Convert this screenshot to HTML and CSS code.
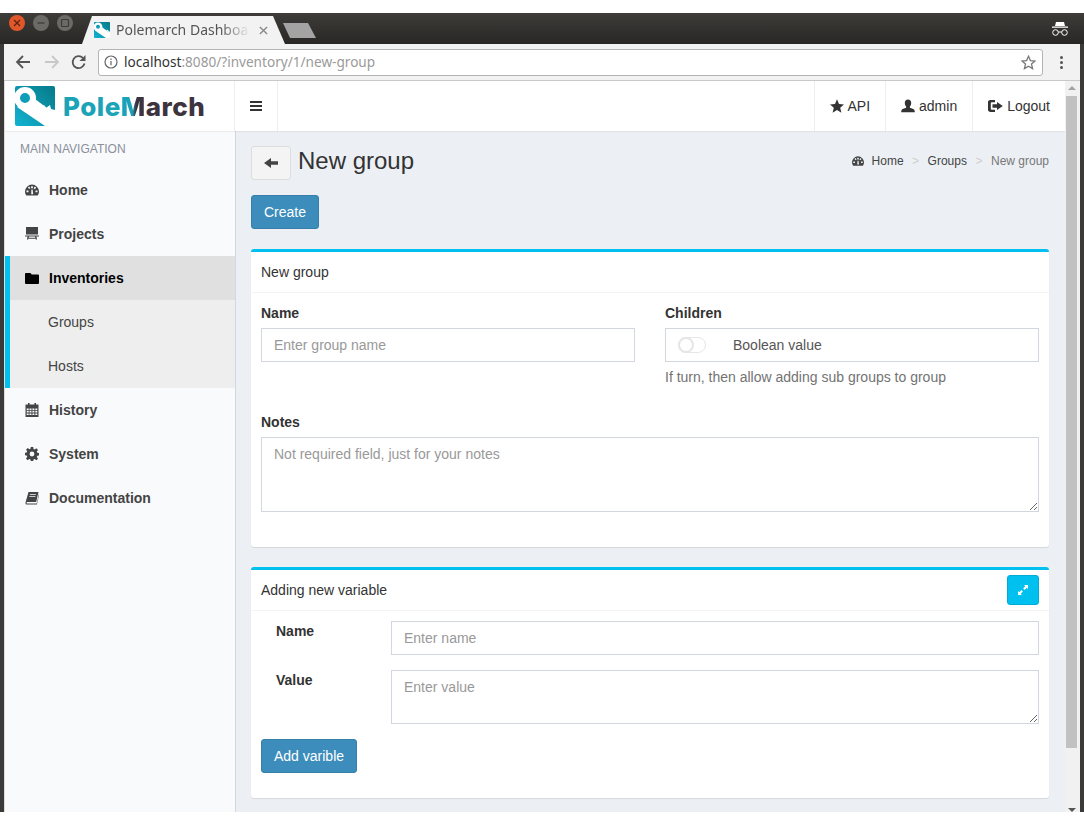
FILE: index.html
```html
<!DOCTYPE html>
<html lang="en">
<head>
    <meta charset="UTF-8">
    <meta name="viewport" content="width=device-width, initial-scale=1.0">
    <title>Polemarch Dashboard</title>
    <link rel="stylesheet" href="styles.css">
</head>
<body>

    <!-- icon sprites -->
    <svg class="sprites" width="0" height="0">
        <defs>
            <linearGradient id="logo-fill" x1="0" y1="1" x2="1" y2="0">
                <stop offset="0" stop-color="#12b3d2"/>
                <stop offset="1" stop-color="#067a88"/>
            </linearGradient>
        </defs>
        <symbol id="logo-mark" viewBox="0 0 40 40">
            <rect width="40" height="40" rx="2" fill="url(#logo-fill)"/>
            <path fill="#fff" d="M2 21 16 10 40 28V40H30z"/>
            <circle cx="10" cy="12" r="8" fill="#0e9db8" stroke="#fff" stroke-width="6"/>
            <path fill="#fff" fill-rule="evenodd" d="M26 22 29 19 31 22 35 19 36 23 40 24V30L30 28zM33 24 32 26 36 27 36 25z"/>
        </symbol>
        <symbol id="i-dashboard" viewBox="0 0 14 14">
            <path fill-rule="evenodd" d="M7 1.600A7 7 0 0 0 0 8.600c0 1.500.5 2.900 1.300 3.900h11.400c.8-1 1.300-2.400 1.300-3.900a7 7 0 0 0-7-7zM6.100 3.200h1.800v2H6.100zM2.900 4.600l1.300-1 1.200 1.500-1.300 1zM9.800 3.600l1.300 1-1.200 1.600-1.300-1zM1.500 7.600h2v1.600h-2zM10.500 7.600h2v1.600h-2zM6.200 11.200 6.400 6.600h1.200l.6 4.600z"/>
        </symbol>
        <symbol id="i-board" viewBox="0 0 14 14">
            <path d="M1 0h12v7.600H1zM0 8.400h14v1.200H0zM2.600 9.600h1.400l-.8 3H1.900zM10 9.600h1.400l.7 3h-1.300zM3.600 10.800h6.800v1H3.600z"/>
        </symbol>
        <symbol id="i-folder" viewBox="0 0 14 14">
            <path d="M1 2h4.500l1.200 1.600H13a1 1 0 0 1 1 1V12a1 1 0 0 1-1 1H1a1 1 0 0 1-1-1V3a1 1 0 0 1 1-1z"/>
        </symbol>
        <symbol id="i-calendar" viewBox="0 0 14 14">
            <path fill-rule="evenodd" d="M3 0h1.600v1.500h4.800V0H11v1.500h2.500V14H.5V1.500H3zM1.700 5.600v1.600h2V5.600zM4.500 5.600v1.600h2V5.600zM7.400 5.600v1.600h2V5.600zM10.300 5.600v1.600h2V5.600zM1.700 8v1.600h2V8zM4.500 8v1.600h2V8zM7.400 8v1.600h2V8zM10.300 8v1.600h2V8zM1.700 10.400V12h2v-1.600zM4.500 10.400V12h2v-1.600zM7.400 10.400V12h2v-1.600zM10.300 10.400V12h2v-1.600z"/>
        </symbol>
        <symbol id="i-cog" viewBox="0 0 14 14">
            <path fill-rule="evenodd" d="M5.800 0h2.400l.3 2 1.200.5L11.400 1.300l1.600 1.700-1.200 1.600.5 1.200 2 .3v2.400l-2 .3-.5 1.200 1.200 1.700-1.600 1.600-1.700-1.200-1.200.5-.3 2H5.800l-.3-2-1.200-.5-1.700 1.200L1 11.400l1.200-1.700-.5-1.200-2-.3V5.800l2-.3.5-1.200L1 2.700l1.700-1.600 1.600 1.200 1.200-.5zM7 4.600a2.400 2.400 0 1 0 0 4.800 2.400 2.400 0 0 0 0-4.800z"/>
        </symbol>
        <symbol id="i-book" viewBox="0 0 14 14">
            <path fill-rule="evenodd" d="M3.500 1H13.500L11.200 11H2.300c-.6 0-.9.4-.8.9.1.4.4.6.8.6h9.400l2.300-10 .3.3-2.400 10.700H2.100C1 13.500.3 12.700.5 11.500zM5 3.200l-.2.8h6l.2-.8zM4.500 5.200l-.2.8h6l.2-.8z"/>
        </symbol>
        <symbol id="i-star" viewBox="0 0 14 14">
            <path d="M7 .3l2 4.800 5 .4-3.800 3.300 1.200 5L7 11.100l-4.400 2.700 1.200-5L0 5.500l5-.4z"/>
        </symbol>
        <symbol id="i-user" viewBox="0 0 14 14">
            <path d="M7 .5c2 0 3.200 1.500 3.200 3.500 0 1.300-.5 2.600-1.300 3.400v1.400c1.700.5 4.100 1.100 4.600 2.500.2.600.3 1.300.3 1.900H.2c0-.6.1-1.300.3-1.900.5-1.400 2.900-2 4.600-2.500V7.400C4.300 6.600 3.800 5.300 3.800 4 3.800 2 5 .5 7 .5z"/>
        </symbol>
        <symbol id="i-logout" viewBox="0 0 15 14">
            <path d="M2.500 1H7v2.200H3.600c-.5 0-.8.300-.8.800v6c0 .5.300.8.800.8H7V13H2.500C1.100 13 0 12.100 0 10.800V3.200C0 1.900 1.100 1 2.500 1zM9 3l5.800 4L9 11V8.700H4.500V5.300H9z"/>
        </symbol>
        <symbol id="i-back" viewBox="0 0 14 14">
            <path d="M7 2v3.300h7v3.400H7V12L0 7z"/>
        </symbol>
        <symbol id="i-menu" viewBox="0 0 12 10">
            <path d="M0 0h12v2H0zM0 4h12v2H0zM0 8h12v2H0z"/>
        </symbol>
        <symbol id="i-resize" viewBox="0 0 12 12">
            <path d="M7 1h4v4L9.700 3.700 7.500 5.900 6.100 4.500 8.300 2.300zM5.900 7.500 3.700 9.700 5 11H1V7l1.300 1.300L4.500 6.100z"/>
        </symbol>
    </svg>

    <div class="window">

        <div class="titlebar">
            <div class="win-buttons">
                <span class="win-btn close"><svg viewBox="0 0 16 16"><path d="M5 5l6 6M11 5l-6 6"/></svg></span>
                <span class="win-btn"><svg viewBox="0 0 16 16"><path d="M4.500 8h7"/></svg></span>
                <span class="win-btn"><svg viewBox="0 0 16 16"><rect x="4.500" y="4.500" width="7" height="7" rx="1"/></svg></span>
            </div>
            <div class="tab">
                <svg class="favicon"><use href="#logo-mark"/></svg>
                <span class="tab-title">Polemarch Dashboard</span>
                <svg class="tab-close" viewBox="0 0 10 10"><path d="M1 1l8 8M9 1l-8 8"/></svg>
            </div>
            <div class="new-tab"></div>
            <svg class="incognito" viewBox="0 0 18 16">
                <path fill="#fff" d="M5 1h8l1 4H4zM1 5.600h16v1.200H1z"/>
                <g fill="none" stroke="#fff" stroke-width="1">
                    <circle cx="4.500" cy="11.500" r="2.800"/>
                    <circle cx="13.500" cy="11.500" r="2.800"/>
                    <path d="M7.300 11h3.400"/>
                </g>
            </svg>
        </div>

        <div class="toolbar">
            <svg class="tool-icon" viewBox="0 0 16 16"><path d="M15 8H2M8 2 2 8l6 6" fill="none" stroke="#555" stroke-width="1.800"/></svg>
            <svg class="tool-icon" viewBox="0 0 16 16"><path d="M1 8h13M8 2l6 6-6 6" fill="none" stroke="#c8c8c8" stroke-width="1.800"/></svg>
            <svg class="tool-icon reload" viewBox="0 0 16 16"><path d="M13.500 9.500A6 6 0 1 1 12 4" fill="none" stroke="#555" stroke-width="1.800"/><path d="M14.500 1v6h-6z" fill="#555"/></svg>
            <div class="omnibox">
                <svg class="info-icon" viewBox="0 0 14 14">
                    <circle cx="7" cy="7" r="6" fill="none" stroke="#666" stroke-width="1.200"/>
                    <path d="M6.400 6h1.200v4.200H6.400zM6.400 3.600h1.200v1.300H6.400z" fill="#666"/>
                </svg>
                <span class="url"><b>localhost</b>:8080/?inventory/1/new-group</span>
                <svg class="bookmark" viewBox="0 0 14 14"><path d="M7 1.200l1.800 4 4.300.4-3.300 2.800 1 4.300L7 10.400l-3.800 2.300 1-4.300L.9 5.600l4.300-.4z" fill="none" stroke="#777" stroke-width="1.200"/></svg>
            </div>
            <div class="dots"><i></i><i></i><i></i></div>
        </div>

        <div class="view">
            <div class="app">
                <header class="top-header">
                    <a class="brand">
                        <svg class="brand-mark"><use href="#logo-mark"/></svg>
                        <span class="brand-name">Pole<em>M</em><strong>arch</strong></span>
                    </a>
                    <a class="menu-toggle"><svg class="icon-menu"><use href="#i-menu"/></svg></a>
                    <nav class="top-nav">
                        <a class="api-link"><svg class="icon"><use href="#i-star"/></svg>API</a>
                        <a><svg class="icon"><use href="#i-user"/></svg>admin</a>
                        <a><svg class="icon icon-wide"><use href="#i-logout"/></svg>Logout</a>
                    </nav>
                </header>

                <div class="columns">
                    <aside class="sidebar">
                        <div class="side-title">MAIN NAVIGATION</div>
                        <a class="side-item"><svg class="icon"><use href="#i-dashboard"/></svg>Home</a>
                        <a class="side-item"><svg class="icon"><use href="#i-board"/></svg>Projects</a>
                        <div class="side-group">
                            <a class="side-item active"><svg class="icon"><use href="#i-folder"/></svg>Inventories</a>
                            <a class="side-sub">Groups</a>
                            <a class="side-sub">Hosts</a>
                        </div>
                        <a class="side-item"><svg class="icon"><use href="#i-calendar"/></svg>History</a>
                        <a class="side-item"><svg class="icon"><use href="#i-cog"/></svg>System</a>
                        <a class="side-item"><svg class="icon"><use href="#i-book"/></svg>Documentation</a>
                    </aside>

                    <main class="content">
                        <div class="page-head">
                            <a class="back-btn"><svg class="icon"><use href="#i-back"/></svg></a>
                            <h1>New group</h1>
                            <ol class="breadcrumb">
                                <li><svg class="icon-small"><use href="#i-dashboard"/></svg>Home</li>
                                <li>Groups</li>
                                <li class="current">New group</li>
                            </ol>
                        </div>

                        <button class="btn-primary" type="button">Create</button>

                        <section class="box">
                            <div class="box-header">New group</div>
                            <div class="box-body">
                                <div class="form-cols">
                                    <div>
                                        <label class="field-label">Name</label>
                                        <input type="text" class="form-control" placeholder="Enter group name">
                                    </div>
                                    <div>
                                        <label class="field-label">Children</label>
                                        <div class="form-control toggle-field">
                                            <span class="toggle"><i></i></span>
                                            <span>Boolean value</span>
                                        </div>
                                        <p class="help">If turn, then allow adding sub groups to group</p>
                                    </div>
                                </div>
                                <label class="field-label">Notes</label>
                                <textarea class="form-control notes" placeholder="Not required field, just for your notes"></textarea>
                            </div>
                        </section>

                        <section class="box box-vars">
                            <div class="box-header">
                                Adding new variable
                                <a class="btn-info"><svg class="icon-small"><use href="#i-resize"/></svg></a>
                            </div>
                            <div class="box-body">
                                <div class="var-row">
                                    <label class="field-label">Name</label>
                                    <input type="text" class="form-control" placeholder="Enter name">
                                </div>
                                <div class="var-row">
                                    <label class="field-label">Value</label>
                                    <textarea class="form-control value" placeholder="Enter value"></textarea>
                                </div>
                                <button class="btn-primary" type="button">Add varible</button>
                            </div>
                        </section>
                    </main>
                </div>
            </div>

            <div class="scrollbar">
                <span class="arrow-up"></span>
                <span class="thumb"></span>
                <span class="arrow-down"></span>
            </div>
        </div>
    </div>

</body>
</html>
```

FILE: styles.css
```css
* {
    box-sizing: border-box;
}
html, body {
    height: 825px;
    margin: 0;
    overflow: hidden;
}
body {
    font-family: "Liberation Sans", Arial, sans-serif;
    font-size: 14px;
    line-height: 20px;
    color: #333;
    background-color: #fff;
    padding-top: 13px;
}
.sprites {
    display: block;
    height: 0;
}
svg {
    fill: currentColor;
}

/* browser window */
.window {
    height: 799px;
    display: flex;
    flex-direction: column;
    border-left: 4px solid #3b3a38;
    border-right: 4px solid #3b3a38;
    background-color: #2c2b29;
}
.titlebar {
    height: 31px;
    flex: none;
    margin: 0 -4px;
    padding-left: 9px;
    display: flex;
    background: linear-gradient(#3d3c39, #282725);
}
.win-buttons {
    display: flex;
    gap: 8px;
    padding-top: 2px;
}
.win-btn {
    width: 16px;
    height: 16px;
    border-radius: 50%;
    background-color: #6b6a66;
    color: #3b3a38;
}
.win-btn svg {
    display: block;
    width: 16px;
    height: 16px;
    fill: none;
    stroke: currentColor;
    stroke-width: 1.2;
}
.win-btn.close {
    background-color: #e2572a;
    color: #5a2310;
}
.tab {
    width: 203px;
    height: 28px;
    margin: 3px 0 0 9px;
    padding-left: 12px;
    display: flex;
    align-items: center;
    flex: none;
    background-color: #f2f2f2;
    clip-path: polygon(0 100%, 10px 0, 191px 0, 203px 100%);
    font-family: "Noto Sans", sans-serif;
    color: #555;
}
.favicon {
    width: 16px;
    height: 16px;
    flex: none;
    margin-right: 6px;
}
.tab-title {
    width: 134px;
    white-space: nowrap;
    overflow: hidden;
    -webkit-mask-image: linear-gradient(to right, #000 78%, transparent 100%);
    mask-image: linear-gradient(to right, #000 78%, transparent 100%);
}
.tab-close {
    width: 9px;
    height: 9px;
    margin-left: 9px;
    fill: none;
    stroke: #888;
    stroke-width: 1.500;
}
.new-tab {
    width: 33px;
    height: 15px;
    margin: 10px 0 0 -2px;
    background-color: #a3a3a3;
    clip-path: polygon(0 0, 25px 0, 33px 100%, 7px 100%);
    flex: none;
}
.incognito {
    width: 18px;
    height: 16px;
    margin: 8px 15px 0 auto;
}
.toolbar {
    height: 37px;
    flex: none;
    padding-left: 11px;
    display: flex;
    align-items: center;
    background-color: #f2f2f2;
    border-bottom: 1px solid #c9c9c9;
}
.tool-icon {
    width: 16px;
    height: 16px;
    margin-right: 13px;
    flex: none;
}
.tool-icon.reload {
    margin-left: -2px;
}
.omnibox {
    width: 945px;
    height: 27px;
    margin-left: -2px;
    padding: 0 6px 0 5px;
    display: flex;
    align-items: center;
    background-color: #fff;
    border: 1px solid #b4b4b4;
    border-radius: 3px;
}
.info-icon {
    width: 14px;
    height: 14px;
    margin-right: 6px;
}
.url {
    font-family: "Noto Sans", sans-serif;
    font-size: 13.6px;
    color: #9a9a9a;
    flex: 1;
}
.url b {
    font-weight: normal;
    color: #333;
}
.bookmark {
    width: 15px;
    height: 15px;
}
.dots {
    margin-left: 17px;
    display: flex;
    flex-direction: column;
    gap: 2px;
}
.dots i {
    width: 3px;
    height: 3px;
    border-radius: 50%;
    background-color: #555;
}

/* page area */
.view {
    flex: 1;
    min-height: 0;
    display: flex;
    background-color: #ecf0f5;
    border-left: 1px solid #ddd;
    overflow: hidden;
}
.app {
    flex: 1;
    min-width: 0;
    display: flex;
    flex-direction: column;
}
.scrollbar {
    width: 15px;
    flex: none;
    position: relative;
    background-color: #f1f1f1;
}
.thumb {
    display: block;
    width: 11px;
    height: 652px;
    margin: 15px 0 0 1px;
    background-color: #c1c1c1;
}
.arrow-up, .arrow-down {
    position: absolute;
    left: 3px;
    width: 0;
    height: 0;
    border-left: 4px solid transparent;
    border-right: 4px solid transparent;
}
.arrow-up {
    top: 5px;
    border-bottom: 4px solid #a3a3a3;
}
.arrow-down {
    bottom: 0;
    border-top: 4px solid #555;
}

/* top header */
.top-header {
    height: 50px;
    flex: none;
    display: flex;
    background-color: #fff;
    box-shadow: 0 1px 1px rgba(0, 0, 0, 0.05);
    position: relative;
}
.brand {
    width: 230px;
    padding-left: 10px;
    display: flex;
    align-items: center;
    border-right: 1px solid #eee;
}
.brand-mark {
    width: 40px;
    height: 40px;
    flex: none;
    margin-right: 8px;
}
.brand-name {
    padding-top: 2px;
    font-family: Inter, "Noto Sans", sans-serif;
    font-size: 26px;
    font-weight: 800;
    letter-spacing: 0.5px;
    color: #1ba3b8;
    white-space: nowrap;
}
.brand-name em {
    font-style: normal;
    background: linear-gradient(to right, #1aa3b8 45%, #3a3340 60%);
    -webkit-background-clip: text;
    background-clip: text;
    color: transparent;
}
.brand-name strong {
    font-weight: 800;
    color: #3d3440;
}
.menu-toggle {
    width: 43px;
    display: flex;
    align-items: center;
    justify-content: center;
    border-right: 1px solid #eee;
}
.icon-menu {
    width: 12px;
    height: 10px;
    color: #333;
}
.top-nav {
    margin-left: auto;
    display: flex;
}
.top-nav a {
    padding: 0 15px;
    display: flex;
    align-items: center;
    gap: 4px;
    border-left: 1px solid #eee;
}
.top-nav .api-link {
    gap: 3px;
}
.icon {
    width: 14px;
    height: 14px;
    flex: none;
}
.icon-wide {
    width: 15px;
}
.icon-small {
    width: 12px;
    height: 12px;
    flex: none;
}

/* sidebar */
.columns {
    flex: 1;
    min-height: 0;
    display: flex;
}
.sidebar {
    width: 231px;
    flex: none;
    background-color: #f9fafc;
    border-right: 1px solid #d2d6de;
    color: #444;
}
.side-title {
    height: 37px;
    padding: 0 0 2px 15px;
    display: flex;
    align-items: center;
    font-size: 12px;
    color: #8a8f9a;
}
.side-item {
    height: 44px;
    padding-left: 20px;
    display: flex;
    align-items: center;
    gap: 10px;
    font-weight: bold;
}
.side-group {
    border-left: 5px solid #00c0ef;
    background-color: #eee;
}
.side-item.active {
    padding-left: 15px;
    background-color: #e0e0e0;
    color: #000;
}
.side-sub {
    height: 44px;
    padding-left: 38px;
    display: flex;
    align-items: center;
}

/* content */
.content {
    flex: 1;
    min-width: 0;
    padding: 15px 16px 0 15px;
}
.page-head {
    height: 34px;
    margin-bottom: 15px;
    display: flex;
    align-items: center;
}
.back-btn {
    width: 40px;
    height: 34px;
    display: flex;
    align-items: center;
    justify-content: center;
    background-color: #f4f4f4;
    border: 1px solid #ddd;
    border-radius: 3px;
    color: #444;
}
h1 {
    margin: 0 0 4px 7px;
    font-size: 24px;
    font-weight: normal;
    line-height: 30px;
}
.breadcrumb {
    margin: 0 0 4px auto;
    padding: 0;
    list-style: none;
    display: flex;
    font-size: 12px;
    color: #444;
}
.breadcrumb li {
    display: flex;
    align-items: center;
}
.breadcrumb li + li::before {
    content: ">";
    padding: 0 8.500px;
    color: #ccc;
}
.breadcrumb .icon-small {
    margin-right: 8px;
}
.breadcrumb .current {
    color: #777;
}
.btn-primary {
    display: block;
    height: 34px;
    padding: 0 12px;
    font-family: inherit;
    font-size: 14px;
    color: #fff;
    background-color: #3c8dbc;
    border: 1px solid #367fa9;
    border-radius: 3px;
}
.box {
    margin-top: 20px;
    background-color: #fff;
    border-top: 3px solid #00c0ef;
    border-radius: 3px;
    box-shadow: 0 1px 1px rgba(0, 0, 0, 0.1);
}
.box-header {
    height: 41px;
    padding: 0 10px;
    display: flex;
    align-items: center;
    justify-content: space-between;
    border-bottom: 1px solid #f4f4f4;
}
.box-body {
    padding: 10px 10px 35px;
}
.box-vars .box-body {
    padding-bottom: 25px;
}
.form-cols {
    display: grid;
    grid-template-columns: 374px 374px;
    gap: 30px;
    margin-bottom: 25px;
}
.field-label {
    display: block;
    margin-bottom: 5px;
    font-weight: bold;
}
.form-control {
    display: block;
    width: 100%;
    height: 34px;
    padding: 6px 12px;
    font-family: inherit;
    font-size: 14px;
    color: #555;
    background-color: #fff;
    border: 1px solid #d2d6de;
    border-radius: 0;
    outline: none;
}
.form-control::placeholder {
    color: #999;
    opacity: 1;
}
textarea.form-control {
    padding-top: 6px;
    line-height: 20px;
}
.notes {
    height: 75px;
}
.value {
    height: 54px;
}
.toggle-field {
    display: flex;
    align-items: center;
    padding-left: 12px;
}
.toggle {
    width: 28px;
    height: 16px;
    margin-right: 27px;
    border: 1px solid #e6e6e6;
    border-radius: 8px;
    display: block;
}
.toggle i {
    display: block;
    width: 16px;
    height: 16px;
    margin: -1px;
    border: 2px solid #e6e6e6;
    border-radius: 50%;
    background-color: #fff;
}
.help {
    margin: 5px 0 0;
    color: #737373;
}
.btn-info {
    width: 32px;
    height: 30px;
    display: flex;
    align-items: center;
    justify-content: center;
    background-color: #00c0ef;
    border: 1px solid #00acd6;
    border-radius: 3px;
    color: #fff;
}
.var-row {
    display: grid;
    grid-template-columns: 130px 1fr;
    margin-bottom: 15px;
}
.var-row .field-label {
    margin: 0;
    padding-left: 15px;
}
```
